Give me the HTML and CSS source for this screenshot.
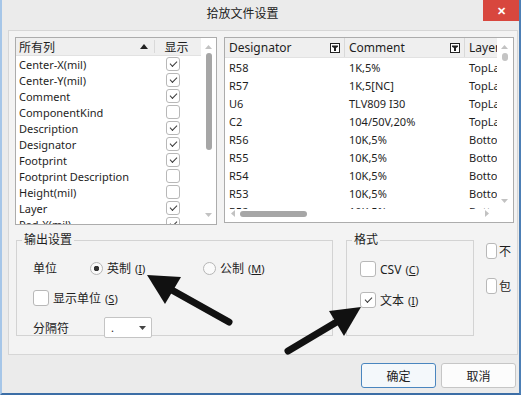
FILE: index.html
```html
<!DOCTYPE html>
<html lang="zh">
<head>
  <meta charset="UTF-8">
  <title>拾放文件设置</title>
  <link rel="stylesheet" href="styles.css">
</head>
<body>

  <div class="window">
    <div class="titlebar">
      <div class="title">拾放文件设置</div>
      <div class="close">✕</div>
    </div>

    <div class="body">
      <div class="panel">
        <div class="top">

          <!-- 列选择 -->
          <div class="collist">
            <div class="colview">
              <div class="lhead">
                <div class="lname">所有列
                  <svg class="sort" width="8" height="5" viewBox="0 0 8 5"><path d="M0 5L4 0L8 5Z" fill="#222"/></svg>
                </div>
                <div class="lshow">显示</div>
              </div>
              <div class="lrow"><span class="lname">Center-X(mil)</span><span class="lshow"><i class="cb on"></i></span></div>
              <div class="lrow"><span class="lname">Center-Y(mil)</span><span class="lshow"><i class="cb on"></i></span></div>
              <div class="lrow"><span class="lname">Comment</span><span class="lshow"><i class="cb on"></i></span></div>
              <div class="lrow"><span class="lname">ComponentKind</span><span class="lshow"><i class="cb"></i></span></div>
              <div class="lrow"><span class="lname">Description</span><span class="lshow"><i class="cb on"></i></span></div>
              <div class="lrow"><span class="lname">Designator</span><span class="lshow"><i class="cb on"></i></span></div>
              <div class="lrow"><span class="lname">Footprint</span><span class="lshow"><i class="cb on"></i></span></div>
              <div class="lrow"><span class="lname">Footprint Description</span><span class="lshow"><i class="cb"></i></span></div>
              <div class="lrow"><span class="lname">Height(mil)</span><span class="lshow"><i class="cb"></i></span></div>
              <div class="lrow"><span class="lname">Layer</span><span class="lshow"><i class="cb on"></i></span></div>
              <div class="lrow"><span class="lname">Pad-X(mil)</span><span class="lshow"><i class="cb on"></i></span></div>
            </div>
            <div class="vscroll">
              <svg width="7" height="4" viewBox="0 0 7 4"><path d="M0 4L3.5 0L7 4Z" fill="#c2c2c2"/></svg>
              <div class="thumb long"></div>
              <svg class="down" width="7" height="4" viewBox="0 0 7 4"><path d="M0 0L3.5 4L7 0Z" fill="#c2c2c2"/></svg>
            </div>
          </div>

          <!-- 预览表格 -->
          <div class="grid">
            <div class="gview">
              <div class="ghead">
                <div class="gcell c1">Designator <svg class="filter" width="10" height="10" viewBox="0 0 10 10"><rect x="0.5" y="0.5" width="9" height="9" fill="#fff" stroke="#222"/><path d="M2 2.5h6v1.2l-2 1.3v3h-2v-3l-2-1.3z" fill="#222"/></svg></div>
                <div class="gcell c2">Comment <svg class="filter" width="10" height="10" viewBox="0 0 10 10"><rect x="0.5" y="0.5" width="9" height="9" fill="#fff" stroke="#222"/><path d="M2 2.5h6v1.2l-2 1.3v3h-2v-3l-2-1.3z" fill="#222"/></svg></div>
                <div class="gcell c3">Layer</div>
              </div>
              <div class="grow"><span class="gcell c1">R58</span><span class="gcell c2">1K,5%</span><span class="gcell c3">TopLayer</span></div>
              <div class="grow"><span class="gcell c1">R57</span><span class="gcell c2">1K,5[NC]</span><span class="gcell c3">TopLayer</span></div>
              <div class="grow"><span class="gcell c1">U6</span><span class="gcell c2">TLV809 I30</span><span class="gcell c3">TopLayer</span></div>
              <div class="grow"><span class="gcell c1">C2</span><span class="gcell c2">104/50V,20%</span><span class="gcell c3">TopLayer</span></div>
              <div class="grow"><span class="gcell c1">R56</span><span class="gcell c2">10K,5%</span><span class="gcell c3">BottomLayer</span></div>
              <div class="grow"><span class="gcell c1">R55</span><span class="gcell c2">10K,5%</span><span class="gcell c3">BottomLayer</span></div>
              <div class="grow"><span class="gcell c1">R54</span><span class="gcell c2">10K,5%</span><span class="gcell c3">BottomLayer</span></div>
              <div class="grow"><span class="gcell c1">R53</span><span class="gcell c2">10K,5%</span><span class="gcell c3">BottomLayer</span></div>
              <div class="grow"><span class="gcell c1">R52</span><span class="gcell c2">10K,5%</span><span class="gcell c3">BottomLayer</span></div>
            </div>
            <div class="vscroll gv">
              <svg width="7" height="4" viewBox="0 0 7 4"><path d="M0 4L3.5 0L7 4Z" fill="#c2c2c2"/></svg>
              <div class="thumb short"></div>
              <svg class="down" width="7" height="4" viewBox="0 0 7 4"><path d="M0 0L3.5 4L7 0Z" fill="#c2c2c2"/></svg>
            </div>
            <div class="hscroll">
              <svg width="4" height="7" viewBox="0 0 4 7"><path d="M4 0L0 3.5L4 7Z" fill="#c2c2c2"/></svg>
              <div class="hthumb"></div>
              <svg class="right" width="4" height="7" viewBox="0 0 4 7"><path d="M0 0L4 3.5L0 7Z" fill="#c2c2c2"/></svg>
            </div>
            <div class="corner"></div>
          </div>
        </div>

        <div class="bottom">
          <fieldset class="group output">
            <legend>输出设置</legend>
            <div class="inner">
              <div class="line units">
                <span class="lbl">单位</span>
                <label class="opt imperial"><i class="radio on"></i>英制 <small>(<u>I</u>)</small></label>
                <label class="opt"><i class="radio"></i>公制 <small>(<u>M</u>)</small></label>
              </div>
              <div class="line showunit">
                <label class="opt"><i class="cb big"></i>显示单位 <small>(<u>S</u>)</small></label>
              </div>
              <div class="line sep">
                <span class="lbl wide">分隔符</span>
                <div class="combo"><span>.</span><svg width="7" height="4" viewBox="0 0 7 4"><path d="M0 0L3.5 4L7 0Z" fill="#444"/></svg></div>
              </div>
            </div>
          </fieldset>

          <fieldset class="group format">
            <legend>格式</legend>
            <div class="inner">
              <label class="opt fmt"><i class="cb big"></i>CSV <small>(<u>C</u>)</small></label>
              <label class="opt fmt"><i class="cb big on"></i>文本 <small>(<u>I</u>)</small></label>
            </div>
          </fieldset>

          <div class="extra">
            <label class="opt"><i class="cb big"></i>不</label>
            <label class="opt"><i class="cb big"></i>包</label>
          </div>
        </div>
      </div>

      <div class="buttons">
        <button class="btn default">确定</button>
        <button class="btn">取消</button>
      </div>
    </div>
  </div>

  <!-- 标注箭头 -->
  <svg class="arrows" width="528" height="397" viewBox="0 0 528 397">
    <line x1="229" y1="322" x2="170" y2="289" stroke="#111" stroke-width="7" stroke-linecap="round"/>
    <polygon points="147,275 181,277 165,304" fill="#111"/>
    <line x1="288" y1="351" x2="340" y2="320" stroke="#111" stroke-width="7" stroke-linecap="round"/>
    <polygon points="361,307 344,336 329,311" fill="#111"/>
  </svg>

</body>
</html>
```

FILE: styles.css
```css
body { margin: 0; position: relative; background: #fff; font-family: "Noto Sans", "Noto Sans CJK SC", sans-serif; font-size: 11px; color: #1e1e1e; }

.window {
  width: 517px;
  height: 393px;
  background: #ebebeb;
  border-left: 2px solid #a6c6e8;
  border-right: 2px solid #4d7fb5;
  border-bottom: 2px solid #3c6ea6;
}

/* 标题栏 */
.titlebar { display: flex; height: 30px; }
.title { flex: 1; text-align: center; line-height: 28px; font-size: 12px; color: #222; }
.close {
  width: 36px; height: 21px;
  background: #d8473e; color: #fff;
  text-align: center; line-height: 21px; font-size: 11px; font-weight: bold;
}

.body { padding: 0 1px 0 6px; }
.panel {
  width: 502px;
  height: 317px;
  padding: 6px 0 0 6px;
  border: 1px solid #d6d6d6;
  background: #f3f3f3;
  overflow: hidden;
}

.top { display: flex; gap: 7px; }

/* 左侧列表 */
.collist {
  display: flex;
  width: 200px; height: 186px;
  border: 1px solid #acacac;
  background: #fff;
  overflow: hidden;
}
.colview { flex: 1; }
.lhead { display: flex; height: 18px; background: #efefef; border-bottom: 1px solid #e2e2e2; box-sizing: border-box; font-size: 12px; }
.lhead .lname { display: flex; align-items: center; justify-content: space-between; padding-right: 6px; border-right: 1px solid #d9d9d9; margin: 2px 0; }
.lhead .lshow { display: flex; align-items: center; justify-content: center; }
.lrow { display: flex; height: 16px; align-items: center; }
.lname { width: 129px; padding-left: 3px; white-space: nowrap; }
.lshow { flex: 1; display: flex; justify-content: center; padding-right: 3px; }

.cb {
  display: inline-block; position: relative;
  width: 14px; height: 14px;
  box-sizing: border-box;
  border: 1px solid #b8b8b8; border-radius: 3px;
  background: #fff;
}
.cb.on::after {
  content: "";
  position: absolute; left: 3px; top: 3px;
  width: 6px; height: 3px;
  border-left: 1px solid #3a3a3a; border-bottom: 1px solid #3a3a3a;
  transform: rotate(-45deg);
}
.cb.big { width: 16px; height: 16px; }
.cb.big.on::after { left: 4px; top: 4px; }

.vscroll { width: 15px; display: flex; flex-direction: column; align-items: center; padding-top: 7px; }
.vscroll .down { margin-top: auto; margin-bottom: 7px; }
.thumb { width: 6px; border-radius: 3px; background: #a6a6a6; margin-top: 4px; }
.thumb.long { height: 97px; }
.thumb.short { height: 8px; background: #c4c4c4; }

/* 右侧表格 */
.grid {
  display: grid;
  grid-template-columns: 272px 15px;
  grid-template-rows: 171px 13px;
  width: 288px; height: 184px;
  border: 1px solid #acacac;
  background: #fff;
  overflow: hidden;
}
.gview { overflow: hidden; }
.ghead { display: flex; height: 20px; background: #efefef; border-bottom: 1px solid #e2e2e2; box-sizing: border-box; font-size: 12px; }
.ghead .gcell { display: flex; align-items: center; justify-content: space-between; border-right: 1px solid #d9d9d9; padding-right: 4px; }
.grow { display: flex; height: 18px; align-items: center; }
.gcell { padding-left: 4px; white-space: nowrap; box-sizing: border-box; }
.c1, .c2 { width: 120px; flex: none; }
.ghead .c3 { border-right: 0; }
.filter { flex: none; }
.gv .down { margin-bottom: 6px; }
.hscroll { display: flex; align-items: center; padding: 0 8px 4px 6px; }
.hthumb { width: 67px; height: 6px; border-radius: 3px; background: #a6a6a6; margin-left: 5px; }
.hscroll .right { margin-left: auto; }

/* 下方设置 */
.bottom { display: flex; align-items: flex-start; margin-top: 7px; }
.group { margin: 0; padding: 0; border: 1px solid #d3d3d3; box-sizing: border-box; }
.group legend { padding: 0 2px; margin-left: 5px; line-height: 16px; font-size: 12px; }
.output { width: 317px; height: 104px; margin-left: 1px; }
.output .inner { padding: 10px 0 0 16px; }
.line { display: flex; align-items: center; }
.units { height: 20px; }
.showunit { height: 20px; margin-top: 10px; }
.sep { height: 21px; margin-top: 9px; }
.lbl { width: 57px; font-size: 12px; }
.lbl.wide { width: 71px; }
.opt { display: flex; align-items: center; gap: 4px; font-size: 12px; white-space: nowrap; }
.opt small { font-size: 11px; }
.imperial { width: 113px; }
.radio {
  display: inline-block;
  width: 13px; height: 13px; box-sizing: border-box;
  border: 1px solid #b5b5b5; border-radius: 50%;
  background: #fafafa;
}
.radio.on { background: radial-gradient(circle, #333 0 2.5px, #fafafa 3px); }
.combo {
  display: flex; align-items: center; justify-content: space-between;
  width: 48px; height: 21px; box-sizing: border-box;
  padding: 0 5px 0 6px;
  border: 1px solid #c4c4c4; border-radius: 2px;
  background: #fff;
}

.format { width: 128px; height: 104px; margin-left: 13px; }
.format .inner { padding: 13px 0 0 13px; }
.fmt { height: 16px; }
.fmt + .fmt { margin-top: 15px; }

.extra { width: 25px; margin-left: 12px; margin-top: 10px; overflow: hidden; }
.extra .opt { gap: 2px; height: 17px; }
.extra .opt + .opt { margin-top: 18px; }

/* 按钮 */
.buttons { display: flex; justify-content: flex-end; gap: 5px; padding: 8px 2px 0 0; }
.btn {
  width: 75px; height: 25px;
  border: 1px solid #c6c6c6; border-radius: 3px;
  background: #fcfcfc;
  font-family: "Noto Sans CJK SC", sans-serif; font-size: 12px; color: #222;
}
.btn.default { border-color: #4a86bf; background: #f4f8fb; }

.arrows { position: absolute; left: 0; top: 0; pointer-events: none; }
```
